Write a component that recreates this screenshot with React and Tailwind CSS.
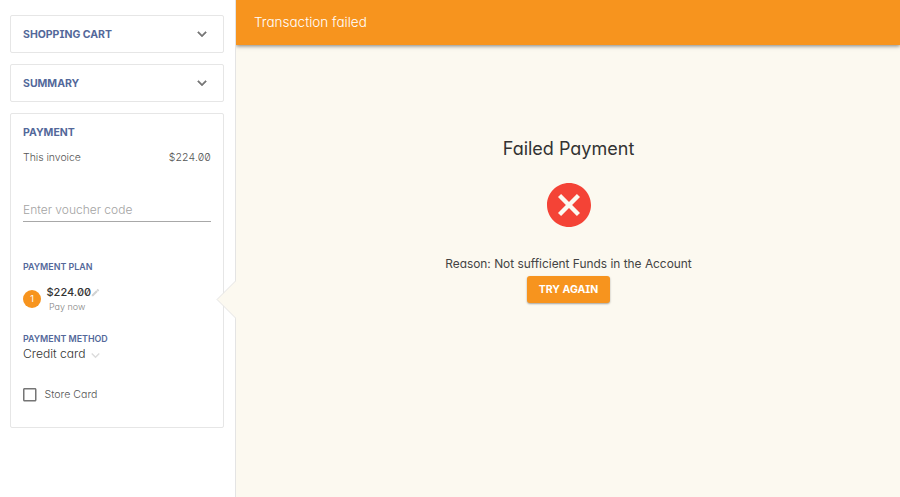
import React from "react";

const Chevron = ({ className, strokeWidth = 0 }) => (
  <svg viewBox="0 0 24 24" className={className} fill="currentColor" stroke="currentColor" strokeWidth={strokeWidth} aria-hidden="true">
    <path d="M16.59 8.59 12 13.17 7.41 8.59 6 10l6 6 6-6z" />
  </svg>
);

function Collapsed({ title }) {
  return (
    <section className="flex h-[38px] items-center justify-between rounded-[2px] border border-[#e6e6e6] pt-px pr-3 pl-3">
      <h2 className="mt-px text-[10.5px] leading-4 font-bold text-[#53689a]">{title}</h2>
      <Chevron strokeWidth={0.6} className="mb-px h-[18px] w-[18px] text-[#757575]" />
    </section>
  );
}

function PaymentCard() {
  return (
    <section className="flex h-[315px] flex-col rounded-[2px] border border-[#e6e6e6] px-3 pt-[11px]">
      <h2 className="text-[10.5px] leading-4 font-bold text-[#53689a]">PAYMENT</h2>
      <div className="mt-[9px] flex justify-between text-[10.5px] leading-4 font-light text-[#555]">
        <span className="tracking-[-0.05px]">This invoice</span>
        <span className="tracking-[0.15px]">$224.00</span>
      </div>
      <div className="mt-[34px] h-[22px] border-b border-[#a8a8a8] text-[12px] leading-[19px] font-light text-[#a3a3a3]">
        Enter voucher code
      </div>
      <h3 className="mt-[37px] text-[8.9px] leading-4 font-semibold text-[#53689a]">PAYMENT PLAN</h3>
      <div className="mt-[9px] flex items-center">
        <span className="flex h-[18px] w-[18px] items-center justify-center rounded-full bg-[#f7941e] text-[9px] text-white">1</span>
        <div className="ml-[5.5px] flex flex-col">
          <span className="flex items-center text-[11px] leading-4 font-medium text-[#333]">
            $224.00
            <svg viewBox="0 0 24 24" className="h-[9px] w-[9px] text-[#d2d2d2]" fill="currentColor" aria-hidden="true">
              <path d="M2 18v4h4L18 10l-4-4zM22 6l-4-4-3 3 4 4z" />
            </svg>
          </span>
          <span className="mt-px ml-[2.5px] text-[9px] leading-3 font-light text-[#858585]">Pay now</span>
        </div>
      </div>
      <h3 className="mt-[18px] text-[8.9px] leading-4 font-semibold text-[#53689a]">PAYMENT METHOD</h3>
      <div className="-mt-px flex h-4 items-center text-[12.1px] leading-4 font-light text-[#333]">
        Credit card
        <Chevron className="mt-[2px] ml-px h-[17px] w-[17px] text-[#dcdcdc]" />
      </div>
      <label className="mt-[25px] flex h-4 items-center text-[10.6px] leading-4 font-light text-[#555]">
        <svg viewBox="3 3 18 18" className="mr-2 h-[13.5px] w-[13.5px] text-[#757575]" fill="currentColor" aria-hidden="true">
          <path d="M19 5v14H5V5zm0-2H5c-1.1 0-2 .9-2 2v14c0 1.1.9 2 2 2h14c1.1 0 2-.9 2-2V5c0-1.1-.9-2-2-2" />
        </svg>
        Store Card
      </label>
    </section>
  );
}

export default function App() {
  return (
    <div className="flex h-[497px] w-[900px] overflow-hidden bg-white font-['Inter',sans-serif] [font-feature-settings:'cv11','zero','cv08']">
      <aside className="flex w-[235px] shrink-0 flex-col gap-[11px] pt-[15px] pr-[11px] pl-[10px]">
        <Collapsed title="SHOPPING CART" />
        <Collapsed title="SUMMARY" />
        <PaymentCard />
      </aside>
      <main className="relative flex flex-1 flex-col overflow-x-visible border-l border-[#e4e4e4] bg-[#fcf9f0]">
        <svg viewBox="0 0 20 40" className="absolute top-[280px] -left-[20px] h-10 w-5" aria-hidden="true">
          <path d="M20 .5 1 19.5 20 38.5z" fill="#fcf9f0" />
          <path d="M19.5 1 1 19.5 19.5 38" fill="none" stroke="#e4e4e4" />
        </svg>
        <header className="flex h-[45px] shrink-0 items-center bg-[#f7941e] pl-[18px] text-[13.5px] font-light text-white shadow-[0_1px_4px_rgba(0,0,0,0.5)] [clip-path:inset(0_0_-8px_0)]">
          Transaction failed
        </header>
        <div className="flex flex-col items-center pt-[92px] pl-px">
          <h1 className="text-[18px] leading-6 text-[#333]">Failed Payment</h1>
          <svg viewBox="2 2 20 20" className="mt-[22px] h-[44px] w-[44px]" aria-hidden="true">
            <path fill="#f44336" d="M12 2C6.47 2 2 6.47 2 12s4.47 10 10 10 10-4.47 10-10S17.53 2 12 2m5 13.59L15.59 17 12 13.41 8.41 17 7 15.59 10.59 12 7 8.41 8.41 7 12 10.59 15.59 7 17 8.41 13.41 12z" />
          </svg>
          <p className="mt-[29px] text-[11.9px] leading-4 text-[#444]">Reason: Not sufficient Funds in the Account</p>
          <button className="mt-1 h-[27px] w-[83px] rounded-[3px] bg-[#f7941e] text-[10.5px] font-bold text-white shadow-[0_1px_2px_rgba(0,0,0,0.35)]">TRY AGAIN</button>
        </div>
      </main>
    </div>
  );
}
